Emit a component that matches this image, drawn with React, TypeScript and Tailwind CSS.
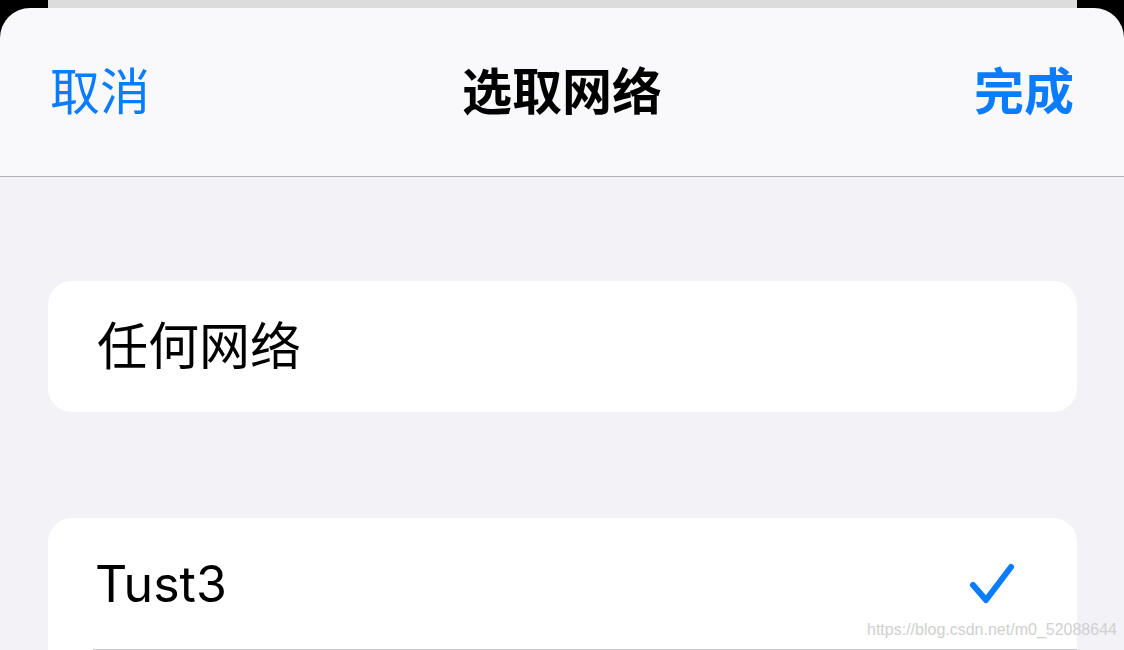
import React from "react";

export default function App() {
  const font = { fontFamily: 'Inter, "Noto Sans CJK SC", "Noto Sans", sans-serif' };
  return (
    <div className="w-[1124px] h-[650px] overflow-hidden bg-black relative" style={font}>
      <div className="h-[8px] flex">
        <div className="ml-[48px] mr-[47px] flex-1 bg-[#dcdcdc]" />
      </div>
      <div className="rounded-t-[30px] bg-[#f9f9fb] h-[642px] overflow-hidden flex flex-col">
        <div className="h-[169px] flex items-center justify-between px-[50px] border-b border-[#b1b1b5] shrink-0">
          <span className="text-[50px] leading-none text-[#0a7cff]">取消</span>
          <span className="text-[50px] leading-none font-bold text-black">选取网络</span>
          <span className="text-[50px] leading-none font-bold text-[#0a7cff]">完成</span>
        </div>
        <div className="flex-1 bg-[#f2f2f7] pt-[104px] px-[47px] pl-[48px] flex flex-col">
          <div className="h-[131px] bg-white rounded-[24px] flex items-center pl-[49px]">
            <span className="text-[51px] leading-none text-black">任何网络</span>
          </div>
          <div className="mt-[106px] bg-white rounded-t-[24px] pl-[45px]">
            <div className="h-[132px] flex items-center justify-between border-b border-[#c6c6c8] pr-[60px]">
              <span className="text-[50px] leading-none text-black pl-[2px]" style={{ fontFamily: 'Inter, "Noto Sans", sans-serif' }}>Tust3</span>
              <svg width="48" height="44" viewBox="0 0 48 44" className="mt-[2px]">
                <polyline points="4,22 17,37 42,4" fill="none" stroke="#0a7cff" strokeWidth="6" strokeLinecap="round" strokeLinejoin="round" />
              </svg>
            </div>
          </div>
        </div>
      </div>
      <div className="absolute left-[867px] top-[622px] text-[16px] text-[#d0d0d0] leading-none" style={{ fontFamily: '"Liberation Sans", Arial, sans-serif' }}>
        https://blog.csdn.net/m0_52088644
      </div>
    </div>
  );
}
